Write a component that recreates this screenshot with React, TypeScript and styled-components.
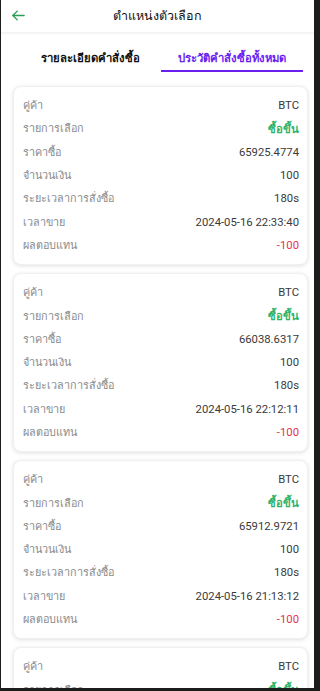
import styled, { createGlobalStyle } from "styled-components";

interface Order {
  pair: string;
  side: string;
  price: string;
  amount: string;
  duration: string;
  time: string;
  result: string;
}

const orders: Order[] = [
  { pair: "BTC", side: "ซื้อขึ้น", price: "65925.4774", amount: "100", duration: "180s", time: "2024-05-16 22:33:40", result: "-100" },
  { pair: "BTC", side: "ซื้อขึ้น", price: "66038.6317", amount: "100", duration: "180s", time: "2024-05-16 22:12:11", result: "-100" },
  { pair: "BTC", side: "ซื้อขึ้น", price: "65912.9721", amount: "100", duration: "180s", time: "2024-05-16 21:13:12", result: "-100" },
  { pair: "BTC", side: "ซื้อขึ้น", price: "65900.1200", amount: "100", duration: "180s", time: "2024-05-16 20:41:05", result: "-100" },
];

const App = () => {
  return (
    <>
      <GlobalStyle />
      <Page>
        <Header>
          <BackButton aria-label="back">
            <svg width="15" height="15" viewBox="0 0 24 24" fill="none" stroke="#2e9a55" strokeWidth="2.2" strokeLinecap="round" strokeLinejoin="round">
              <path d="M21 12H3" />
              <path d="M10 5l-7 7 7 7" />
            </svg>
          </BackButton>
          <Title>ตำแหน่งตัวเลือก</Title>
        </Header>
        <Tabs>
          <Tab>รายละเอียดคำสั่งซื้อ</Tab>
          <Tab $active>ประวัติคำสั่งซื้อทั้งหมด</Tab>
        </Tabs>
        <List>
          {orders.map((o, i) => (
            <Card key={i}>
              <Row><Label>คู่ค้า</Label><Value>{o.pair}</Value></Row>
              <Row><Label>รายการเลือก</Label><Value $tone="up">{o.side}</Value></Row>
              <Row><Label>ราคาซื้อ</Label><Value>{o.price}</Value></Row>
              <Row><Label>จำนวนเงิน</Label><Value>{o.amount}</Value></Row>
              <Row><Label>ระยะเวลาการสั่งซื้อ</Label><Value>{o.duration}</Value></Row>
              <Row><Label>เวลาขาย</Label><Value>{o.time}</Value></Row>
              <Row><Label>ผลตอบแทน</Label><Value $tone="down">{o.result}</Value></Row>
            </Card>
          ))}
        </List>
      </Page>
    </>
  );
};

const GlobalStyle = createGlobalStyle`
  html, body {
    margin: 0;
    padding: 0;
    height: 100%;
    overflow: hidden;
    background: #1c1c1c;
  }
  body {
    font-family: "Noto Sans", "DejaVu Sans", sans-serif;
  }
`;

const Page = styled.div`
  box-sizing: border-box;
  height: 688px;
  width: 313px;
  margin-left: 1px;
  background: #ffffff;
  overflow: hidden;
`;

const Header = styled.header`
  position: relative;
  height: 32px;
  display: flex;
  align-items: center;
  justify-content: center;
  box-shadow: 0 1px 2px rgba(0, 0, 0, 0.05);
  border-bottom: 1px solid #f2f2f2;
`;

const BackButton = styled.button`
  position: absolute;
  left: 10px;
  top: 8px;
  padding: 0;
  border: none;
  background: none;
  display: flex;
`;

const Title = styled.h1`
  margin: 0;
  font-size: 12.5px;
  font-weight: 500;
  color: #111;
`;

const Tabs = styled.nav`
  display: flex;
  justify-content: space-between;
  padding: 0 11px 0 36px;
  height: 39px;
`;

const Tab = styled.div<{ $active?: boolean }>`
  display: flex;
  align-items: flex-end;
  justify-content: center;
  padding: 0 ${({ $active }) => ($active ? "10px" : "4px")} 3px;
  font-size: 11.3px;
  font-weight: 700;
  color: ${({ $active }) => ($active ? "#6a1ff0" : "#111")};
  border-bottom: 2px solid ${({ $active }) => ($active ? "#6a1ff0" : "transparent")};
  width: ${({ $active }) => ($active ? "122px" : "auto")};
`;

const List = styled.div`
  display: flex;
  flex-direction: column;
  gap: 8px;
  padding: 14px 6px 0 12px;
`;

const Card = styled.div`
  border-radius: 8px;
  background: #fff;
  box-shadow: 0 1px 4px rgba(0, 0, 0, 0.12);
  border: 1px solid #f0f0f0;
  padding: 7px 8px 7px 9px;
`;

const Row = styled.div`
  display: flex;
  justify-content: space-between;
  align-items: center;
  height: 23.3px;
`;

const Label = styled.span`
  font-size: 10.8px;
  color: #8a8a8a;
`;

const Value = styled.span<{ $tone?: "up" | "down" }>`
  font-family: "Roboto", "Noto Sans", sans-serif;
  font-size: 11.3px;
  color: ${({ $tone }) => ($tone === "up" ? "#2fb36b" : $tone === "down" ? "#e5334b" : "#3a3a3a")};
  font-weight: ${({ $tone }) => ($tone === "up" ? 700 : 400)};
`;

export default App;
